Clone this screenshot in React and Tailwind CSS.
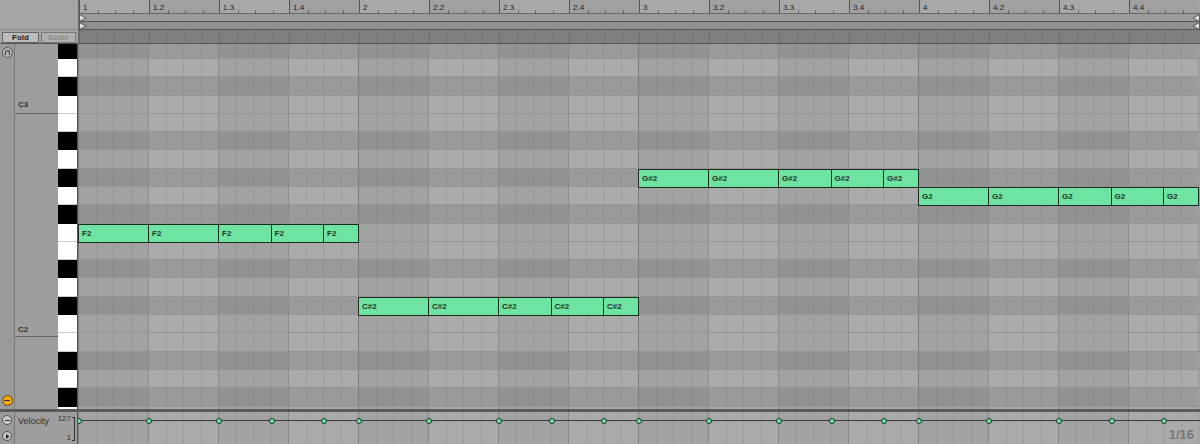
import React from "react";

const ROWH = 18.3;
const black = [1, 3, 6, 8, 10];
const TOP = 63;
const rows = Array.from({ length: 21 }, (_, i) => TOP - i);
const isBlack = (m) => black.includes(((m % 12) + 12) % 12);

const durs = [4, 4, 3, 3, 2];
const bars = [
  { row: 10, name: "F2" },
  { row: 14, name: "C#2" },
  { row: 7, name: "G#2" },
  { row: 8, name: "G2" },
];
const notes = [];
bars.forEach((b, bi) => {
  let s = 0;
  durs.forEach((d) => {
    notes.push({ x: bi * 280 + s * 17.5, w: d * 17.5, row: b.row, name: b.name });
    s += d;
  });
});

const font = { fontFamily: '"Liberation Sans", Arial, sans-serif' };

function BeatCells({ dark }) {
  return (
    <div className="flex h-full">
      {Array.from({ length: 16 }, (_, i) => (
        <div
          key={i}
          className={
            "h-full flex shrink-0 w-[70px] border-l " +
            (i % 4 === 0 ? "border-[#7a7a7a] " : "border-[#8c8c8c] ") +
            (i % 2 === 0
              ? dark ? "bg-[#929292]" : "bg-[#a2a2a2]"
              : dark ? "bg-[#9a9a9a]" : "bg-[#ababab]")
          }
        >
          {[0, 1, 2, 3].map((q) => (
            <div key={q} className={"flex-1 h-full " + (q > 0 ? "border-l border-black/[0.07]" : "")} />
          ))}
        </div>
      ))}
    </div>
  );
}

export default function App() {
  const labels = ["1", "1.2", "1.3", "1.4", "2", "2.2", "2.3", "2.4", "3", "3.2", "3.3", "3.4", "4", "4.2", "4.3", "4.4"];
  return (
    <div className="w-[1200px] h-[444px] overflow-hidden flex flex-col bg-[#9e9e9e] text-[#222]" style={font}>
      <div className="flex h-[44px] border-b border-[#555]">
        <div className="w-[79px] shrink-0 flex flex-col bg-[#a5a5a5] border-r border-[#666]">
          <div className="h-[30px] border-b border-[#888]" />
          <div className="flex gap-[2px] px-[2px] pt-[2px]">
            <div className="w-[37px] h-[11px] border border-[#666] bg-[#bdbdbd] text-[8px] leading-[9px] text-center font-bold text-[#222]">Fold</div>
            <div className="w-[35px] h-[11px] border border-[#777] bg-[#b0b0b0] text-[8px] leading-[9px] text-center font-bold text-[#8a8a8a]">Scale</div>
          </div>
        </div>
        <div className="flex-1 flex flex-col">
          <div className="h-[14px] flex bg-[#a6a6a6] border-b border-[#666]">
            {labels.map((l, i) => (
              <div key={i} className={"w-[70px] shrink-0 relative border-l border-[#555] text-[8px] leading-[10px] pl-[3px] pt-[3px] " + (i % 2 ? "bg-[#a0a0a0]" : "bg-[#a8a8a8]")}>
                {l}
                {[17.5, 35, 52.5].map((t) => (
                  <div key={t} className="absolute bottom-0 w-px h-[3px] bg-[#666]" style={{ left: t }} />
                ))}
              </div>
            ))}
          </div>
          <div className="h-[8px] bg-[#9c9c9c] border-b border-[#555] relative">
            <svg className="absolute left-0 top-0" width="8" height="8"><path d="M0.5 0.5 L7 4 L0.5 7.5 Z" fill="#ddd" stroke="#444" strokeWidth="0.8" /></svg>
            <svg className="absolute right-0 top-0" width="8" height="8"><path d="M7.5 0.5 L1 4 L7.5 7.5 Z" fill="#ddd" stroke="#444" strokeWidth="0.8" /></svg>
          </div>
          <div className="h-[8px] bg-[#8f8f8f] border-b border-[#555] relative">
            <svg className="absolute left-0 top-0" width="8" height="8"><path d="M0.5 0.5 L7 4 L0.5 7.5 Z" fill="#ddd" stroke="#444" strokeWidth="0.8" /></svg>
            <svg className="absolute right-0 top-0" width="8" height="8"><path d="M7.5 0.5 L1 4 L7.5 7.5 Z" fill="#ddd" stroke="#444" strokeWidth="0.8" /></svg>
          </div>
          <div className="flex-1 bg-[#7f7f7f]">
            <div className="flex h-full">
              {Array.from({ length: 16 }, (_, i) => (
                <div key={i} className="w-[70px] shrink-0 flex border-l border-[#6c6c6c]">
                  {[0, 1, 2, 3].map((q) => <div key={q} className={"flex-1 " + (q ? "border-l border-[#747474]" : "")} />)}
                </div>
              ))}
            </div>
          </div>
        </div>
      </div>

      <div className="flex h-[368px] border-b-[3px] border-[#5a5a5a]">
        <div className="w-[15px] shrink-0 bg-[#9a9a9a] border-r border-[#777] flex flex-col justify-between items-center py-[3px]">
          <div className="w-[11px] h-[11px] rounded-full border border-[#555] bg-[#b5b5b5] flex items-center justify-center">
            <div className="w-[5px] h-[5px] rounded-t-full border border-[#333] border-b-0" />
          </div>
          <div className="w-[11px] h-[11px] rounded-full border border-[#6b4a00] bg-[#f2a81d] flex items-center justify-center">
            <div className="w-[6px] h-px bg-[#333]" />
          </div>
        </div>
        <div className="w-[43px] shrink-0 bg-[#9e9e9e] relative">
          <div className="absolute left-[3px] top-[55px] text-[8px] font-bold text-[#333]">C3</div>
          <div className="absolute left-0 right-0 top-[69px] h-px bg-[#666]" />
          <div className="absolute left-[3px] top-[280px] text-[8px] font-bold text-[#333]">C2</div>
          <div className="absolute left-0 right-0 top-[292px] h-px bg-[#666]" />
        </div>
        <div className="w-[20px] shrink-0 overflow-hidden border-r border-[#555]">
          <div className="flex flex-col -mt-[3.4px]">
            {rows.map((m) => (
              <div key={m} className={"shrink-0 border-b " + (isBlack(m) ? "bg-black border-black" : "bg-white border-[#ccc]")} style={{ height: ROWH }} />
            ))}
          </div>
        </div>
        <div className="flex-1 relative overflow-hidden">
          <div className="flex flex-col -mt-[3.4px]">
            {rows.map((m) => (
              <div key={m} className="shrink-0 border-b border-black/[0.06]" style={{ height: ROWH }}>
                <BeatCells dark={isBlack(m)} />
              </div>
            ))}
          </div>
          {notes.map((n, i) => (
            <div
              key={i}
              className="absolute bg-[#6ee3a2] border border-[#1b2a20] text-[8px] font-bold leading-none pl-[3px] pt-[5px] text-[#1f3326]"
              style={{ left: n.x, width: n.w + 1, top: n.row * ROWH - 3.4, height: ROWH + 1 }}
            >
              {n.name}
            </div>
          ))}
        </div>
      </div>

      <div className="flex flex-1">
        <div className="w-[15px] shrink-0 bg-[#9a9a9a] border-r border-[#777] flex flex-col justify-around items-center">
          <div className="w-[10px] h-[10px] rounded-full border border-[#555] bg-[#c8c8c8] flex items-center justify-center"><div className="w-[5px] h-px bg-[#333]" /></div>
          <div className="w-[10px] h-[10px] rounded-full border border-[#555] bg-[#c8c8c8] flex items-center justify-center">
            <svg width="5" height="5"><path d="M1 0 L4.5 2.5 L1 5 Z" fill="#222" /></svg>
          </div>
        </div>
        <div className="w-[63px] shrink-0 bg-[#9e9e9e] border-r border-[#555] relative text-[9px] text-[#333]">
          <div className="absolute left-[3px] top-[3px]">Velocity</div>
          <div className="absolute right-[6px] top-[1px] text-[8px]">127</div>
          <div className="absolute right-[6px] bottom-[0px] text-[8px]">1</div>
          <div className="absolute right-[2px] top-[5px] bottom-[3px] w-[3px] border-t border-b border-r border-[#333]" />
        </div>
        <div className="flex-1 relative bg-[#a4a4a4] overflow-hidden">
          <div className="flex h-full">
            {Array.from({ length: 16 }, (_, i) => (
              <div key={i} className={"w-[70px] shrink-0 flex border-l border-[#858585] " + (i % 2 ? "bg-[#aaaaaa]" : "bg-[#a2a2a2]")}>
                {[0, 1, 2, 3].map((q) => <div key={q} className={"flex-1 " + (q ? "border-l border-black/[0.07]" : "")} />)}
              </div>
            ))}
          </div>
          <div className="absolute left-0 right-0 top-[8px] h-px bg-[#3a3a3a]" />
          {notes.map((n, i) => (
            <div key={i} className="absolute w-[6px] h-[6px] rounded-full bg-[#6ee3a2] border border-[#1f3326]" style={{ left: n.x - 2, top: 5.5 }} />
          ))}
          <div className="absolute right-[6px] bottom-[0px] text-[13px] font-bold text-[#777]">1/16</div>
        </div>
      </div>
    </div>
  );
}
